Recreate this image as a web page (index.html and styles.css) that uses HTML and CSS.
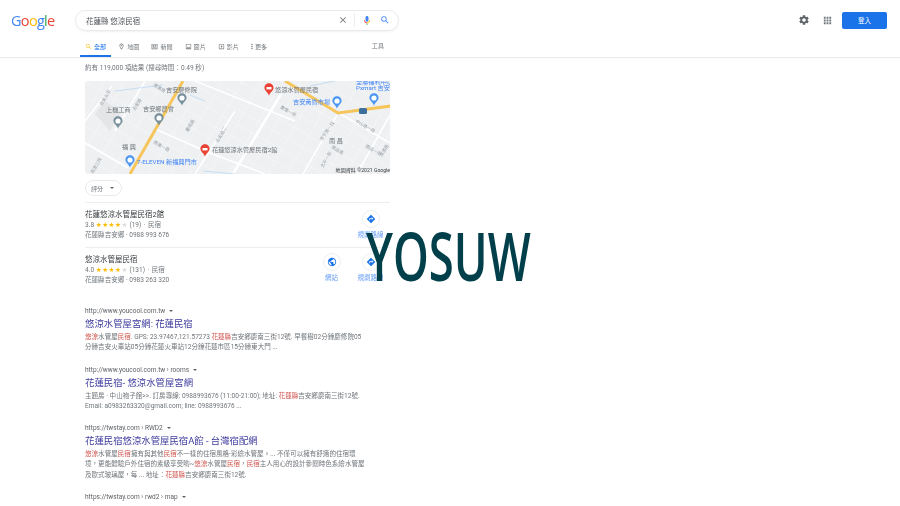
FILE: index.html
```html
<!DOCTYPE html>
<html lang="zh-Hant">
  <head>
    <meta charset="UTF-8" />
    <title>花蓮縣 悠涼民宿 - Google 搜尋</title>
    <link rel="stylesheet" href="styles.css">
  </head>
  <body>
    <svg class="defs" width="0" height="0">
      <symbol id="i-search" viewBox="0 0 24 24"><path d="M15.5 14h-.79l-.28-.27A6.47 6.47 0 0 0 16 9.5 6.5 6.5 0 1 0 9.5 16c1.61 0 3.09-.59 4.23-1.57l.27.28v.79l5 4.99L20.49 19l-4.99-5zm-6 0C7.01 14 5 11.99 5 9.5S7.01 5 9.5 5 14 7.01 14 9.5 11.99 14 9.5 14z"/></symbol>
      <symbol id="i-pin" viewBox="0 0 24 24"><path d="M12 2C8.13 2 5 5.13 5 9c0 5.25 7 13 7 13s7-7.75 7-13c0-3.87-3.13-7-7-7zm0 2c2.76 0 5 2.24 5 5 0 2.88-2.88 7.19-5 9.88C9.92 16.21 7 11.85 7 9c0-2.76 2.24-5 5-5zm0 2.5a2.5 2.5 0 1 0 0 5 2.5 2.5 0 0 0 0-5z"/></symbol>
      <symbol id="i-news" viewBox="0 0 24 24"><path d="M22 3l-2 0H4L2 3v18h20V3zM4 19V5h16v14H4zm2-11h5v5H6V8zm7 0h5v2h-5V8zm0 3h5v2h-5v-2zm-7 4h12v2H6v-2z"/></symbol>
      <symbol id="i-image" viewBox="0 0 24 24"><path d="M19 3H5a2 2 0 0 0-2 2v14a2 2 0 0 0 2 2h14a2 2 0 0 0 2-2V5a2 2 0 0 0-2-2zm0 16H5V5h14v14zm-5-6l-3 3.5-2-2.5-3 4h12l-4-5z"/></symbol>
      <symbol id="i-video" viewBox="0 0 24 24"><path d="M19 3H5a2 2 0 0 0-2 2v14a2 2 0 0 0 2 2h14a2 2 0 0 0 2-2V5a2 2 0 0 0-2-2zm0 16H5V5h14v14zM10 8v8l6-4-6-4z"/></symbol>
      <symbol id="i-dots" viewBox="0 0 6 24"><circle cx="3" cy="5" r="2.4"/><circle cx="3" cy="12" r="2.4"/><circle cx="3" cy="19" r="2.4"/></symbol>
      <symbol id="i-dirs" viewBox="0 0 24 24"><path d="M21.71 11.29l-9-9a.996.996 0 0 0-1.41 0l-9 9a.996.996 0 0 0 0 1.41l9 9c.39.39 1.02.39 1.41 0l9-9a.996.996 0 0 0 0-1.41zM14 14.5V12h-4v3H8v-4c0-.55.45-1 1-1h5V7.5l3.5 3.5-3.5 3.5z"/></symbol>
      <symbol id="i-globe" viewBox="0 0 24 24"><path d="M12 2C6.48 2 2 6.48 2 12s4.48 10 10 10 10-4.48 10-10S17.52 2 12 2zm-1 17.93c-3.95-.49-7-3.85-7-7.93 0-.62.08-1.21.21-1.79L9 15v1c0 1.1.9 2 2 2v1.93zm6.9-2.54c-.26-.81-1-1.39-1.9-1.39h-1v-3c0-.55-.45-1-1-1H8v-2h2c.55 0 1-.45 1-1V7h2c1.1 0 2-.9 2-2v-.41c2.93 1.19 5 4.06 5 7.41 0 2.08-.8 3.97-2.1 5.39z"/></symbol>
      <symbol id="i-mappin" viewBox="0 0 24 30"><path d="M12 0C6 0 1 5 1 11c0 7 8 10 11 19 3-9 11-12 11-19C23 5 18 0 12 0z"/></symbol>
      <pattern id="blocks" width="17" height="13" patternUnits="userSpaceOnUse" patternTransform="rotate(30)">
        <path class="block-line" d="M0 0H17M0 0V13"/>
      </pattern>
    </svg>

    <div class="page">
      <header class="header">
        <div class="logo"><span class="g-blue">G</span><span class="g-red">o</span><span class="g-yellow">o</span><span class="g-blue">g</span><span class="g-green">l</span><span class="g-red">e</span></div>
        <div class="searchbox">
          <span class="query">花蓮縣 悠涼民宿</span>
          <svg class="sb-close" viewBox="0 0 24 24"><path d="M19 6.41 17.59 5 12 10.59 6.41 5 5 6.41 10.59 12 5 17.59 6.41 19 12 13.41 17.59 19 19 17.59 13.41 12z"/></svg>
          <span class="sb-sep"></span>
          <svg class="sb-mic" viewBox="0 0 24 24">
            <path fill="#4285f4" d="M12 15a3.5 3.5 0 0 0 3.5-3.5v-7a3.5 3.5 0 0 0-7 0v7A3.5 3.5 0 0 0 12 15z"/>
            <path fill="#34a853" d="M11 18.9h2V23h-2z"/>
            <path fill="#ea4335" d="M5 11.5C5 15.4 8.1 19 12 19v-2c-2.8 0-5-2.6-5-5.5H5z"/>
            <path fill="#fbbc04" d="M19 11.5c0 3.9-3.1 7.5-7 7.5v-2c2.8 0 5-2.6 5-5.5h2z"/>
          </svg>
          <svg class="sb-search"><use href="#i-search"/></svg>
        </div>
        <div class="header-right">
          <svg class="hd-gear" viewBox="0 0 24 24"><path d="M19.14 12.94c.04-.3.06-.61.06-.94 0-.32-.02-.64-.07-.94l2.03-1.58a.49.49 0 0 0 .12-.61l-1.92-3.32a.488.488 0 0 0-.59-.22l-2.39.96c-.5-.38-1.03-.7-1.62-.94l-.36-2.54a.484.484 0 0 0-.48-.41h-3.84c-.24 0-.43.17-.47.41l-.36 2.54c-.59.24-1.13.57-1.62.94l-2.39-.96c-.22-.08-.47 0-.59.22L2.74 8.87c-.12.21-.08.47.12.61l2.03 1.58c-.05.3-.09.63-.09.94s.02.64.07.94l-2.03 1.58a.49.49 0 0 0-.12.61l1.92 3.32c.12.22.37.29.59.22l2.39-.96c.5.38 1.03.7 1.62.94l.36 2.54c.05.24.24.41.48.41h3.84c.24 0 .44-.17.47-.41l.36-2.54c.59-.24 1.13-.56 1.62-.94l2.39.96c.22.08.47 0 .59-.22l1.92-3.32c.12-.22.07-.47-.12-.61l-2.01-1.58zM12 15.6c-1.98 0-3.6-1.62-3.6-3.6s1.62-3.6 3.6-3.6 3.6 1.62 3.6 3.6-1.62 3.6-3.6 3.6z"/></svg>
          <svg class="hd-apps" viewBox="0 0 24 24"><path d="M4 8h4V4H4v4zm6 12h4v-4h-4v4zm-6 0h4v-4H4v4zm0-6h4v-4H4v4zm6 0h4v-4h-4v4zm6-10v4h4V4h-4zm-6 4h4V4h-4v4zm6 6h4v-4h-4v4zm0 6h4v-4h-4v4z"/></svg>
          <button class="signin">登入</button>
        </div>
      </header>

      <nav class="tabs">
        <div class="tab-list">
          <a class="tab active"><svg class="tab-icon"><use href="#i-search"/></svg>全部</a>
          <a class="tab"><svg class="tab-icon"><use href="#i-pin"/></svg>地圖</a>
          <a class="tab"><svg class="tab-icon"><use href="#i-news"/></svg>新聞</a>
          <a class="tab"><svg class="tab-icon"><use href="#i-image"/></svg>圖片</a>
          <a class="tab"><svg class="tab-icon"><use href="#i-video"/></svg>影片</a>
          <a class="tab"><svg class="tab-dots"><use href="#i-dots"/></svg>更多</a>
          <a class="tools">工具</a>
        </div>
      </nav>

      <main class="main">
        <div class="stats">約有 119,000 項結果 (搜尋時間：0.49 秒)</div>

        <div class="map">
          <svg width="305" height="93" viewBox="0 0 305 93">
            <rect width="305" height="93" fill="url(#blocks)"/>
            <path class="block" d="M10 33 L20 20 L36 31 L25 50z"/>
            <g class="road">
              <path d="M27 5 L0 40 M0 62 L43 87 M70 48 L120 70 L180 93 M205 3 L305 62 M252 34 L218 93 M305 34 L272 93 M110 0 L210 40 M60 0 L30 50 M150 30 L110 93"/>
            </g>
            <path class="road-wide" d="M196 13 L148 93"/>
            <path class="water" d="M30 10 L78 4 M105 14 L120 20 M118 90 L150 93 M225 5 L250 0"/>
            <path class="highway" d="M98 0 L45 93 M200 0 L253 32 L306 25"/>
            <rect class="shield" x="274" y="27" width="8" height="6" rx="1.5"/>

            <text class="street" transform="translate(17 25) rotate(-60)">吉安五街</text>
            <text class="street" transform="translate(50 30) rotate(-60)">吉安路</text>
            <text class="street" transform="translate(68 5) rotate(30)">南濱路</text>
            <text class="street" transform="translate(103 51) rotate(-60)">慶南路</text>
            <text class="street" transform="translate(133 62) rotate(-60)">吉安路二</text>
            <text class="street" transform="translate(68 62) rotate(30)">南濱一路</text>
            <text class="street" transform="translate(8 93) rotate(-60)">南濱三段</text>
            <text class="street" transform="translate(195 27) rotate(30)">慶豐一街</text>
            <text class="street" transform="translate(237 60) rotate(-55)">吉安路一段</text>
            <text class="street" transform="translate(270 41) rotate(30)">中山路一段</text>
            <text class="street" transform="translate(246 67) rotate(30)">南昌路</text>
            <text class="street" transform="translate(280 66) rotate(30)">南昌一街</text>
            <text class="street" transform="translate(297 76) rotate(-60)">南濱路</text>
            <text class="street" transform="translate(238 87) rotate(-60)">太平一街</text>

            <use class="pin-grey" href="#i-mappin" x="92" y="12" width="10" height="13"/>
            <circle class="pin-hole" cx="97" cy="17" r="2.6"/>
            <use class="pin-grey" href="#i-mappin" x="28" y="35" width="10" height="13"/>
            <circle class="pin-hole" cx="33" cy="40" r="2.6"/>
            <use class="pin-grey" href="#i-mappin" x="69" y="32" width="10" height="13"/>
            <circle class="pin-hole" cx="74" cy="37" r="2.6"/>
            <use class="pin-blue" href="#i-mappin" x="40" y="74" width="10" height="13"/>
            <circle class="pin-hole" cx="45" cy="79" r="2.6"/>
            <use class="pin-blue" href="#i-mappin" x="247" y="15" width="10" height="13"/>
            <circle class="pin-hole" cx="252" cy="20" r="2.6"/>
            <use class="pin-blue" href="#i-mappin" x="284" y="12" width="10" height="13"/>
            <circle class="pin-hole" cx="289" cy="17" r="2.6"/>
            <use class="pin-red" href="#i-mappin" x="179" y="2" width="10" height="13"/>
            <rect class="pin-bed" x="181.5" y="6" width="5" height="2.4"/>
            <use class="pin-red" href="#i-mappin" x="115" y="63" width="10" height="13"/>
            <rect class="pin-bed" x="117.5" y="67" width="5" height="2.4"/>

            <text class="lbl" x="81" y="11">吉安慶修院</text>
            <text class="lbl" x="21" y="31">上機工商</text>
            <text class="lbl" x="58" y="30">吉安鄉農會</text>
            <text class="lbl" x="190" y="11">悠涼水管屋民宿</text>
            <text class="lbl" x="127" y="71">花蓮悠涼水管屋民宿2館</text>
            <text class="lbl-blue" x="52" y="83">7-ELEVEN 新福興門市</text>
            <text class="lbl-blue" x="208" y="23">吉安黃昏市場</text>
            <text class="lbl-blue" x="271" y="3">全聯福利中心</text>
            <text class="lbl-blue" x="271" y="9">Pxmart 吉安</text>
            <text class="lbl" x="244" y="62">南 昌</text>
            <text class="lbl" x="37" y="68">福 興</text>
            <text class="lbl-small" x="305" y="91" text-anchor="end">地圖資料 ©2021 Google</text>
          </svg>
        </div>

        <div class="chip">評分<span class="caret"></span></div>

        <div class="place first">
          <div class="place-info">
            <div class="place-name">花蓮悠涼水管屋民宿2館</div>
            <div class="place-line">3.8 <span class="stars">★★★★<span class="star-off">★</span></span> (19)<span class="sep">·</span>民宿</div>
            <div class="place-line">花蓮縣吉安鄉 · 0988 993 676</div>
          </div>
          <div class="place-actions">
            <div class="action"><span class="action-circle"><svg class="action-icon"><use href="#i-dirs"/></svg></span>規劃路線</div>
          </div>
        </div>

        <div class="place">
          <div class="place-info">
            <div class="place-name">悠涼水管屋民宿</div>
            <div class="place-line">4.0 <span class="stars">★★★★<span class="star-off">★</span></span> (131)<span class="sep">·</span>民宿</div>
            <div class="place-line">花蓮縣吉安鄉 · 0983 263 320</div>
          </div>
          <div class="place-actions">
            <div class="action"><span class="action-circle"><svg class="action-icon"><use href="#i-globe"/></svg></span>網站</div>
            <div class="action"><span class="action-circle"><svg class="action-icon"><use href="#i-dirs"/></svg></span>規劃路線</div>
          </div>
        </div>

        <div class="result">
          <div class="url">http://www.youcool.com.tw<span class="caret small"></span></div>
          <div class="title">悠涼水管屋宮網: 花蓮民宿</div>
          <div class="snippet"><em>悠涼</em>水管屋<em>民宿</em>. GPS: 23.97467,121.57273 <em>花蓮縣</em>吉安鄉慶南三街12號. 早餐樹02分鐘慶修院05<br>分鐘吉安火車站05分鐘花蓮火車站12分鐘花蓮市區15分鐘東大門 ...</div>
        </div>

        <div class="result">
          <div class="url">http://www.youcool.com.tw › rooms<span class="caret small"></span></div>
          <div class="title">花蓮民宿- 悠涼水管屋宮網</div>
          <div class="snippet">主題房 · 中山袍子館&gt;&gt;. 訂房專線: 0988993676 (11:00-21:00); 地址: <em>花蓮縣</em>吉安鄉慶南三街12號.<br>Email: a0983263320@gmail.com; line: 0988993676 ...</div>
        </div>

        <div class="result">
          <div class="url">https://twstay.com › RWD2<span class="caret small"></span></div>
          <div class="title">花蓮民宿悠涼水管屋民宿A館 - 台灣宿配網</div>
          <div class="snippet"><em>悠涼</em>水管屋<em>民宿</em>擁有與其他<em>民宿</em>不一樣的住宿風格-彩繪水管屋。... 不僅可以擁有舒適的住宿環<br>境，更能體驗戶外住宿的素級享受喲~<em>悠涼</em>水管屋<em>民宿</em>，<em>民宿</em>主人用心的設計參閱時色系繪水管屋<br>及歐式玻璃屋，每 ... 地址：<em>花蓮縣</em>吉安鄉慶南三街12號.</div>
        </div>

        <div class="result">
          <div class="url">https://twstay.com › rwd2 › map<span class="caret small"></span></div>
        </div>
      </main>

      <div class="watermark">YOSUW</div>
    </div>
  </body>
</html>
```

FILE: styles.css
```css
html,
body {
  margin: 0;
  height: 506px;
  overflow: hidden;
  background: #fff;
}
body {
  font-family: Roboto, "Liberation Sans", "Noto Sans CJK TC", sans-serif;
  color: #5f6368;
}
.defs {
  display: block;
  height: 0;
}
.page {
  position: relative;
  width: 900px;
  height: 506px;
  overflow: hidden;
  filter: blur(0.4px);
}

/* header */
.header {
  display: flex;
  align-items: center;
  height: 37px;
  padding: 3px 13px 0 11px;
  box-sizing: border-box;
}
.logo {
  width: 64px;
  font-family: "Open Sans", sans-serif;
  font-size: 14.5px;
  letter-spacing: -0.7px;
  line-height: 17px;
}
.g-blue { color: #4285f4; }
.g-red { color: #ea4335; }
.g-yellow { color: #fbbc05; }
.g-green { color: #34a853; }
.searchbox {
  display: flex;
  align-items: center;
  width: 324px;
  height: 21px;
  padding: 0 8px 0 10px;
  box-sizing: border-box;
  border: 1px solid #e8eaec;
  border-radius: 11px;
  box-shadow: 0 1px 2px rgba(32, 33, 36, 0.06);
}
.query {
  flex: 1;
  font-size: 7.5px;
  color: #4d5156;
}
.sb-close {
  width: 10px;
  height: 10px;
  fill: #70757a;
}
.sb-sep {
  width: 1px;
  height: 14px;
  margin: 0 7px 0 6px;
  background: #eceff1;
}
.sb-mic {
  width: 10px;
  height: 11px;
}
.sb-search {
  width: 10px;
  height: 10px;
  margin-left: 8px;
  fill: #4285f4;
}
.header-right {
  display: flex;
  align-items: center;
  margin-left: auto;
}
.hd-gear {
  width: 12px;
  height: 12px;
  fill: #5f6368;
}
.hd-apps {
  width: 11px;
  height: 11px;
  margin-left: 12px;
  fill: #70757a;
}
.signin {
  width: 45px;
  height: 17px;
  margin-left: 9px;
  padding: 0;
  border: none;
  border-radius: 2px;
  background: #1a73e8;
  color: #fff;
  font-family: inherit;
  font-size: 6.5px;
}

/* tabs */
.tabs {
  height: 20px;
  padding-left: 80px;
  border-bottom: 1px solid #ebebeb;
}
.tab-list {
  display: flex;
  gap: 2px;
  width: 304px;
  height: 20px;
}
.tab {
  display: flex;
  align-items: center;
  gap: 2px;
  padding: 0 5px 1px;
  box-sizing: border-box;
  height: 20px;
  font-size: 6.1px;
  color: #70757a;
}
.tab.active {
  color: #1a73e8;
  border-bottom: 2px solid #1a73e8;
  padding-bottom: 0;
}
.tab-icon {
  width: 7px;
  height: 7px;
  fill: #70757a;
}
.tab.active .tab-icon {
  fill: #fbbc05;
}
.tab-dots {
  width: 2px;
  height: 7px;
  fill: #70757a;
}
.tools {
  margin-left: auto;
  line-height: 18px;
  font-size: 6.1px;
  color: #70757a;
}

/* left column */
.main {
  width: 305px;
  margin-left: 85px;
}
.stats {
  padding-top: 6px;
  height: 23px;
  box-sizing: border-box;
  line-height: 9px;
  font-size: 6.56px;
  color: #70757a;
}
.map {
  height: 93px;
  border-radius: 3px;
  overflow: hidden;
  background: #eef0f2;
}
.map svg {
  display: block;
}
.block-line {
  fill: none;
  stroke: #f8f9fa;
  stroke-width: 1;
}
.block { fill: #e3e5e7; }
.road {
  fill: none;
  stroke: #fff;
  stroke-width: 1.6;
}
.road-wide {
  fill: none;
  stroke: #fff;
  stroke-width: 2.6;
}
.water {
  fill: none;
  stroke: #b5d6f5;
  stroke-width: 0.7;
}
.highway {
  fill: none;
  stroke: #f6c65c;
  stroke-width: 3;
}
.shield { fill: #3d6f9e; }
.pin-grey { fill: #78909c; }
.pin-blue { fill: #4b96f3; }
.pin-red { fill: #ea4335; }
.pin-hole { fill: #fff; }
.pin-bed { fill: #fff; }
.lbl,
.lbl-blue,
.lbl-small,
.street {
  font-family: Roboto, "Noto Sans CJK TC", sans-serif;
  font-size: 6.2px;
  fill: #70757a;
}
.lbl-blue { fill: #4285f4; }
.lbl-small {
  font-size: 5.1px;
  fill: #3c4043;
}
.street {
  font-size: 4.4px;
  fill: #9aa0a6;
}
.chip {
  display: flex;
  align-items: center;
  width: 37px;
  height: 16px;
  margin-top: 6px;
  padding-left: 5px;
  box-sizing: border-box;
  border: 1px solid #e8eaed;
  border-radius: 8px;
  font-size: 6.1px;
  color: #70757a;
}
.caret {
  width: 0;
  height: 0;
  margin-left: 7px;
  border-style: solid;
  border-width: 2px 2px 0;
  border-color: #5f6368 transparent transparent;
}
.caret.small {
  margin-left: 4px;
  vertical-align: 1px;
  display: inline-block;
}

/* local results */
.place {
  display: flex;
  justify-content: space-between;
  height: 45px;
  padding-top: 6px;
  box-sizing: border-box;
  border-top: 1px solid #eeeeee;
}
.place.first {
  margin-top: 6px;
}
.place-name {
  line-height: 11px;
  font-size: 7.5px;
  color: #3c4043;
}
.place-line {
  line-height: 10px;
  font-size: 6.56px;
  color: #70757a;
}
.stars {
  font-family: "DejaVu Sans", sans-serif;
  font-size: 6.6px;
  letter-spacing: 0.5px;
  color: #fbbc04;
}
.star-off {
  color: #dadce0;
}
.sep {
  margin: 0 2.5px;
}
.place-actions {
  display: flex;
  gap: 10px;
  margin-top: -1px;
  padding-right: 5px;
}
.place.first .place-actions {
  margin-top: 1px;
}
.action {
  display: flex;
  flex-direction: column;
  align-items: center;
  width: 29px;
  font-size: 6.56px;
  line-height: 8px;
  color: #669df6;
  white-space: nowrap;
}
.action-circle {
  display: flex;
  align-items: center;
  justify-content: center;
  width: 16px;
  height: 16px;
  margin-bottom: 3px;
  border: 1px solid #eceff1;
  border-radius: 50%;
}
.action-icon {
  width: 10px;
  height: 10px;
  fill: #1a73e8;
}

/* organic results */
.result {
  width: 305px;
  padding-top: 1px;
  margin-bottom: 12px;
}
.place + .result {
  margin-top: 14px;
}
.url {
  line-height: 9px;
  font-size: 6.56px;
  color: #5f6368;
}
.title {
  margin-top: 1px;
  line-height: 13px;
  font-size: 9.4px;
  color: #3c3a9c;
  white-space: nowrap;
}
.snippet {
  margin-top: 2px;
  line-height: 10.3px;
  font-size: 6.56px;
  color: #70757a;
  white-space: nowrap;
}
.snippet em {
  font-style: normal;
  color: #d0524c;
}

/* stamped over the screenshot */
.watermark {
  position: absolute;
  left: 366px;
  top: 217px;
  font-family: "Open Sans", sans-serif;
  font-weight: 600;
  font-size: 67px;
  line-height: 76px;
  color: #01404a;
  transform: scaleX(0.68);
  transform-origin: left top;
}
```
